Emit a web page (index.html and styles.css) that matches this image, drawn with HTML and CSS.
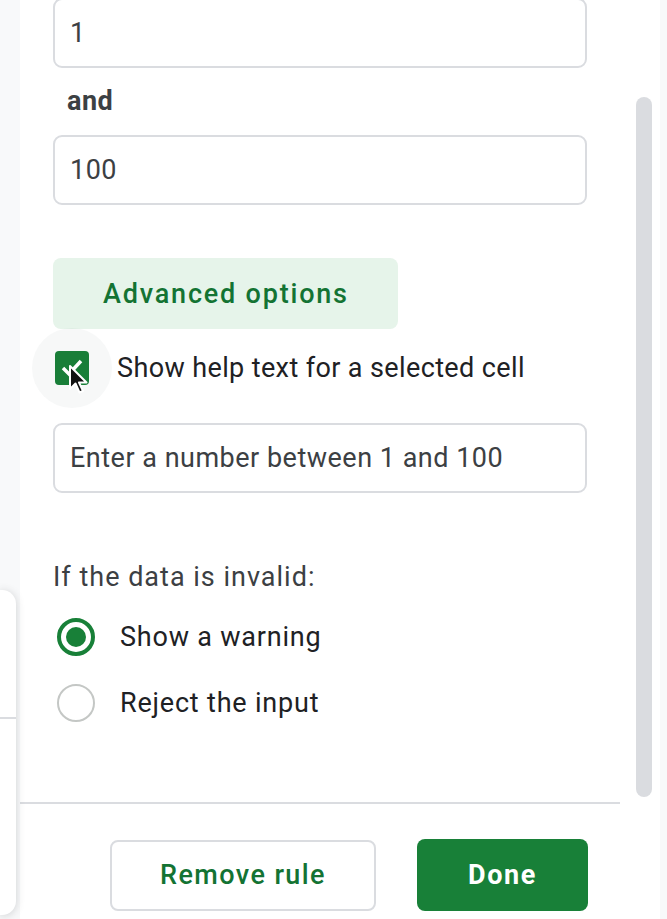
FILE: index.html
```html
<!DOCTYPE html>
<html>
<head>
<meta charset="utf-8">
<link rel="stylesheet" href="styles.css">
</head>
<body>
<div class="page">
  <div class="left-strip">
    <div class="side-card"><div class="side-line"></div></div>
  </div>
  <div class="panel">
    <div class="scroll-area">
      <div class="content">
        <div class="field field-first">1</div>
        <div class="label-and">and</div>
        <div class="field">100</div>
        <div class="adv-btn">Advanced options</div>
        <div class="check-row">
          <div class="check-box">
            <svg class="check-mark" width="34" height="34" viewBox="0 0 34 34"><path d="M8 17 L14 23 L26 10" fill="none" stroke="#fff" stroke-width="3.5"/></svg>
            <svg class="cursor" width="22" height="32" viewBox="0 0 22 32"><path d="M2 2 L2 25 L7.5 19.5 L11.5 28.5 L15 27 L11 18.5 L18.5 18.5 Z" fill="#111" stroke="#fff" stroke-width="2" stroke-linejoin="round"/></svg>
          </div>
          <span class="check-label">Show help text for a selected cell</span>
        </div>
        <div class="field field-help">Enter a number between 1 and 100</div>
        <div class="section-title">If the data is invalid:</div>
        <div class="radio-row radio-first">
          <span class="radio radio-on"></span>
          <span class="radio-label">Show a warning</span>
        </div>
        <div class="radio-row">
          <span class="radio"></span>
          <span class="radio-label">Reject the input</span>
        </div>
      </div>
      <div class="scrollbar"></div>
    </div>
    <div class="separator"></div>
    <div class="footer">
      <div class="btn btn-outline">Remove rule</div>
      <div class="btn btn-primary">Done</div>
    </div>
  </div>
  <div class="right-strip"></div>
</div>
</body>
</html>
```

FILE: styles.css
```css
* { box-sizing: border-box; }
html, body { margin: 0; padding: 0; }
body {
  font-family: Roboto, "Liberation Sans", Arial, sans-serif;
  background: #f8f9fa;
  overflow: hidden;
}
.page {
  display: flex;
  width: 667px;
  height: 919px;
}
.left-strip {
  width: 20px;
  flex: none;
  background: #f8f9fa;
  position: relative;
  z-index: 2;
}
.side-card {
  position: absolute;
  left: 0;
  top: 590px;
  width: 16px;
  height: 325px;
  background: #fff;
  border-radius: 0 14px 14px 0;
  box-shadow: 0 1px 8px rgba(60, 64, 67, 0.22);
}
.side-line {
  position: absolute;
  left: 0;
  right: 0;
  top: 127px;
  height: 2px;
  background: #dadce0;
}
.panel {
  width: 640px;
  flex: none;
  background: #fff;
  display: flex;
  flex-direction: column;
}
.right-strip {
  flex: 1;
  background: #f8f9fa;
}
.scroll-area {
  position: relative;
  height: 802px;
  overflow: hidden;
}
.content {
  margin-left: 33px;
  width: 534px;
  margin-top: -2px;
  font-size: 27px;
  letter-spacing: 0.5px;
}
.field {
  height: 70px;
  border: 2px solid #dadce0;
  border-radius: 9px;
  display: flex;
  align-items: center;
  padding-left: 15px;
  color: #3c4043;
}
.label-and {
  font-weight: 700;
  color: #3c4043;
  line-height: 32px;
  margin: 17px 0 18px 14px;
}
.adv-btn {
  margin-top: 53px;
  width: 345px;
  height: 71px;
  background: #e6f4ea;
  border-radius: 8px;
  display: flex;
  align-items: center;
  padding-left: 50px;
  font-weight: 500;
  color: #137333;
  letter-spacing: 1.8px;
}
.check-row {
  height: 78px;
  display: flex;
  align-items: center;
}
.check-box {
  position: relative;
  width: 34px;
  height: 34px;
  margin-left: 2px;
  background: #188038;
  border-radius: 4px;
  flex: none;
}
.check-box::before {
  content: "";
  position: absolute;
  left: -23px;
  top: -23px;
  width: 80px;
  height: 80px;
  border-radius: 50%;
  background: rgba(60, 64, 67, 0.04);
}
.check-mark {
  position: absolute;
  left: 0;
  top: 0;
}
.cursor {
  position: absolute;
  left: 13px;
  top: 13px;
}
.check-label {
  margin-left: 28px;
  color: #202124;
  letter-spacing: 0.38px;
}
.field-help {
  margin-top: 16px;
}
.section-title {
  margin-top: 68px;
  line-height: 32px;
  color: #3c4043;
  letter-spacing: 1px;
}
.radio-row {
  height: 66px;
  display: flex;
  align-items: center;
}
.radio-first {
  margin-top: 11px;
}
.radio {
  width: 38px;
  height: 38px;
  margin-left: 4px;
  border-radius: 50%;
  border: 2px solid #c4c7c5;
  flex: none;
  position: relative;
}
.radio-on {
  border: 4px solid #188038;
}
.radio-on::after {
  content: "";
  position: absolute;
  left: 5px;
  top: 5px;
  width: 20px;
  height: 20px;
  border-radius: 50%;
  background: #188038;
}
.radio-label {
  margin-left: 25px;
  color: #202124;
  letter-spacing: 0.8px;
}
.scrollbar {
  position: absolute;
  left: 616px;
  top: 97px;
  width: 16px;
  height: 700px;
  border-radius: 8px;
  background: #dadce0;
}
.separator {
  width: 600px;
  height: 2px;
  background: #dadce0;
  flex: none;
}
.footer {
  display: flex;
  justify-content: flex-end;
  align-items: center;
  gap: 41px;
  padding-right: 72px;
  padding-top: 35px;
}
.btn {
  height: 71px;
  border-radius: 8px;
  display: flex;
  align-items: center;
  justify-content: center;
  font-size: 27px;
  font-weight: 500;
  letter-spacing: 1.4px;
}
.btn-outline {
  width: 266px;
  border: 2px solid #dadce0;
  color: #137333;
}
.btn-primary {
  width: 171px;
  height: 72px;
  background: #188038;
  color: #fff;
  font-weight: 700;
  letter-spacing: 1.6px;
}
```
